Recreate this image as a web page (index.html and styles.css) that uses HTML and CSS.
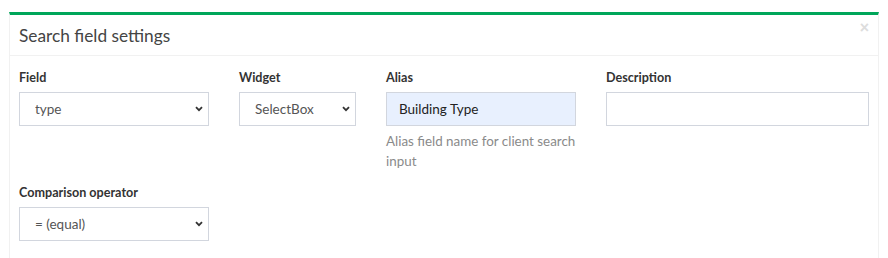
FILE: index.html
```html
<!DOCTYPE html>
<html lang="en">
<head>
    <meta charset="UTF-8">
    <title>Search field settings</title>
    <link rel="stylesheet" href="styles.css">
</head>
<body>

    <!-- Settings box -->
    <div class="box">
        <div class="box-header">
            <h3 class="box-title">Search field settings</h3>
            <button class="box-close" type="button">&times;</button>
        </div>

        <div class="box-body">
            <div class="form-row">
                <div class="form-group col-field">
                    <label>Field</label>
                    <div class="select-wrap">
                        <select class="form-control">
                            <option>type</option>
                        </select>
                        <svg class="caret" width="8" height="6" viewBox="0 0 8 6"><path d="M1 1.2 L4 4.2 L7 1.2" fill="none" stroke="#333" stroke-width="1.8"/></svg>
                    </div>
                </div>
                <div class="form-group col-widget">
                    <label>Widget</label>
                    <div class="select-wrap">
                        <select class="form-control">
                            <option>SelectBox</option>
                        </select>
                        <svg class="caret" width="8" height="6" viewBox="0 0 8 6"><path d="M1 1.2 L4 4.2 L7 1.2" fill="none" stroke="#333" stroke-width="1.8"/></svg>
                    </div>
                </div>
                <div class="form-group col-alias">
                    <label>Alias</label>
                    <input type="text" class="form-control autofilled" value="Building Type">
                    <p class="help-block">Alias field name for client search input</p>
                </div>
                <div class="form-group col-desc">
                    <label>Description</label>
                    <input type="text" class="form-control">
                </div>
            </div>

            <div class="form-row">
                <div class="form-group col-field">
                    <label>Comparison operator</label>
                    <div class="select-wrap">
                        <select class="form-control">
                            <option>= (equal)</option>
                        </select>
                        <svg class="caret" width="8" height="6" viewBox="0 0 8 6"><path d="M1 1.2 L4 4.2 L7 1.2" fill="none" stroke="#333" stroke-width="1.8"/></svg>
                    </div>
                </div>
            </div>
        </div>
    </div>

</body>
</html>
```

FILE: styles.css
```css
body {
    font-family: 'Lato', 'Noto Sans', sans-serif;
    margin: 0;
    padding: 12px 9px 0 9px;
    background: #ffffff;
    color: #333;
}
/* Box */
.box {
    width: 870px;
    box-sizing: border-box;
    border: 1px solid #f1f1f1;
    border-top: 3px solid #00a65a;
    border-bottom: none;
    background: #fff;
    height: 246px;
}
.box-header {
    position: relative;
    height: 40px;
    padding: 0 9px;
    border-bottom: 1px solid #f1f1f1;
    display: flex;
    align-items: center;
}
.box-title {
    margin: 0;
    font-size: 17.3px;
    font-weight: 400;
    color: #444;
}
.box-close {
    position: absolute;
    top: 4px;
    right: 9px;
    border: none;
    background: none;
    padding: 0;
    font-size: 16px;
    font-weight: 700;
    color: #ddd;
    cursor: pointer;
}
.box-body {
    padding: 12px 9px 0 9px;
}
.form-row {
    display: flex;
    gap: 30px;
    margin-bottom: 12px;
}
.col-field { width: 190px; }
.col-widget { width: 117px; }
.col-alias { width: 190px; }
.col-desc { width: 263px; }
.form-group label {
    display: block;
    font-size: 12.6px;
    font-weight: 700;
    line-height: 20px;
    margin-bottom: 4px;
    color: #333;
}
.form-control {
    display: block;
    width: 100%;
    height: 34px;
    box-sizing: border-box;
    border: 1px solid #d2d6de;
    background: #fff;
    font-family: inherit;
    font-size: 13.5px;
    color: #555;
    padding: 6px 12px;
    margin: 0;
    border-radius: 0;
    outline: none;
}
select.form-control {
    appearance: none;
    -webkit-appearance: none;
    padding-left: 15px;
    padding-right: 24px;
}
.select-wrap {
    position: relative;
}
.caret {
    position: absolute;
    right: 6px;
    top: 14px;
    pointer-events: none;
}
.form-control.autofilled {
    background: #e8f0fe;
    color: #222;
}
.help-block {
    margin: 5px 0 0 0;
    font-size: 13.4px;
    line-height: 20px;
    color: #8a8a8a;
}
```
